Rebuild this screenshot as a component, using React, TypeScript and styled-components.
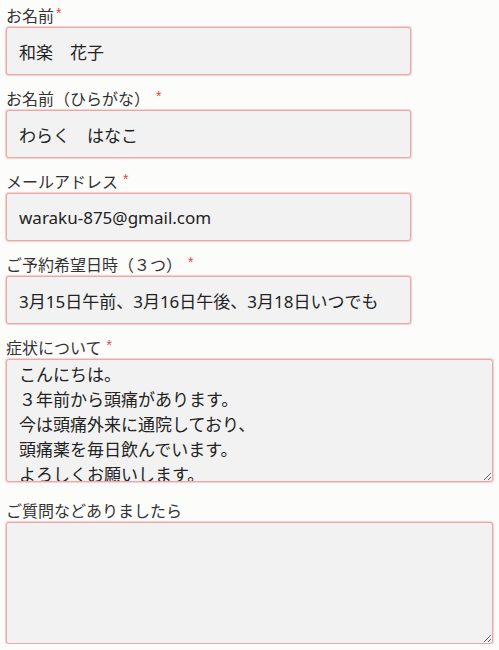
import React from "react";
import styled, { createGlobalStyle } from "styled-components";

const GlobalStyle = createGlobalStyle`
  html, body {
    margin: 0;
    padding: 0;
    background: #fcfcfb;
  }
  body {
    font-family: "Noto Sans CJK JP", "Noto Sans", sans-serif;
    color: #333;
  }
`;

const Form = styled.form`
  display: flex;
  flex-direction: column;
  padding: 3px 0 0 6px;
`;

const Field = styled.div<{ $after: number }>`
  display: flex;
  flex-direction: column;
  align-items: flex-start;
  margin-bottom: ${(p) => p.$after}px;
`;

const Label = styled.label`
  font-size: 16px;
  line-height: 24px;
  height: 24px;
  color: #333;
  white-space: nowrap;
`;

const Required = styled.span<{ $gap: number }>`
  color: #e2453f;
  font-size: 14px;
  line-height: 13px;
  vertical-align: top;
  position: relative;
  top: 4px;
  margin-left: ${(p) => p.$gap}px;
  font-family: "Liberation Sans", sans-serif;
`;

const Input = styled.input`
  box-sizing: border-box;
  width: 405px;
  height: 48px;
  margin: 0;
  padding: 0 12px;
  font-family: "Noto Sans", "Noto Sans CJK JP", sans-serif;
  font-size: 17px;
  color: #222;
  background: #f3f2f2;
  border: 1px solid #e9a7a7;
  border-radius: 3px;
  box-shadow: 0 0 1px 0.5px rgba(236, 180, 180, 0.6);
  outline: none;
`;

const TextArea = styled.textarea<{ $h: number }>`
  box-sizing: border-box;
  display: block;
  width: 487px;
  height: ${(p) => p.$h}px;
  margin: 0;
  padding: 2px 12px;
  font-family: "Noto Sans", "Noto Sans CJK JP", sans-serif;
  font-size: 17px;
  line-height: 25px;
  color: #222;
  background: #f3f2f2;
  border: 1px solid #e9a7a7;
  border-radius: 3px;
  box-shadow: 0 0 1px 0.5px rgba(236, 180, 180, 0.6);
  outline: none;
  overflow: hidden;
  resize: both;
`;

const symptoms =
  "こんにちは。\n３年前から頭痛があります。\n今は頭痛外来に通院しており、\n頭痛薬を毎日飲んでいます。\nよろしくお願いします。";

export default function App() {
  return (
    <>
      <GlobalStyle />
      <Form>
        <Field $after={11}>
          <Label>
            お名前<Required $gap={2}>*</Required>
          </Label>
          <Input defaultValue="和楽　花子" />
        </Field>
        <Field $after={11}>
          <Label>
            お名前（ひらがな）<Required $gap={6}>*</Required>
          </Label>
          <Input defaultValue="わらく　はなこ" />
        </Field>
        <Field $after={11}>
          <Label>
            メールアドレス<Required $gap={5}>*</Required>
          </Label>
          <Input defaultValue="waraku-875@gmail.com" />
        </Field>
        <Field $after={11}>
          <Label>
            ご予約希望日時（３つ）<Required $gap={6}>*</Required>
          </Label>
          <Input defaultValue="3月15日午前、3月16日午後、3月18日いつでも" />
        </Field>
        <Field $after={16}>
          <Label>
            症状について<Required $gap={5}>*</Required>
          </Label>
          <TextArea $h={123} defaultValue={symptoms} />
        </Field>
        <Field $after={0}>
          <Label>ご質問などありましたら</Label>
          <TextArea $h={122} />
        </Field>
      </Form>
    </>
  );
}
